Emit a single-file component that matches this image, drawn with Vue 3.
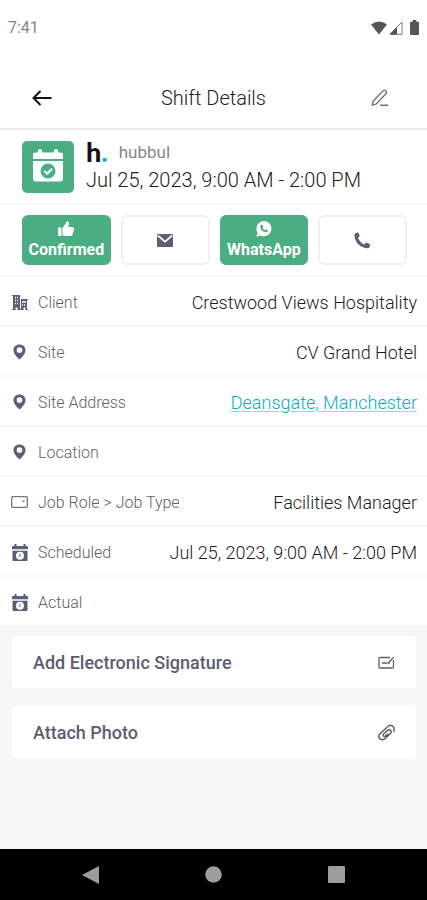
<script setup>
const actions = [
  { icon: 'thumb', label: 'Confirmed', text: true },
  { icon: 'mail', label: 'Email', text: false },
  { icon: 'whatsapp', label: 'WhatsApp', text: true },
  { icon: 'phone', label: 'Call', text: false }
]
const rows = [
  { icon: 'building', label: 'Client', value: 'Crestwood Views Hospitality' },
  { icon: 'pin', label: 'Site', value: 'CV Grand Hotel' },
  { icon: 'pin', label: 'Site Address', value: 'Deansgate, Manchester', link: true },
  { icon: 'pin', label: 'Location', value: '' },
  { icon: 'role', label: 'Job Role > Job Type', value: 'Facilities Manager' },
  { icon: 'calendar', label: 'Scheduled', value: 'Jul 25, 2023, 9:00 AM - 2:00 PM' },
  { icon: 'calendar', label: 'Actual', value: '' }
]
</script>

<template>
  <div class="screen">
    <div class="status">
      <span>7:41</span>
      <div class="status-icons">
        <svg width="16" height="14" viewBox="0 0 16 14"><path d="M0 3.6Q8-2.6 16 3.6L8 13.5Z" fill="#555" /></svg>
        <svg width="14" height="14" viewBox="0 0 14 14"><path d="M1 13.3 13 1V13.3Z" fill="#fff" stroke="#777" stroke-width="1" /><path d="M.5 13.5 8 6V13.5Z" fill="#555" /></svg>
        <svg class="battery" width="9" height="15" viewBox="0 0 9 15"><path d="M2.7 0h3.6v1.7H8q1 0 1 1V14q0 1-1 1H1q-1 0-1-1V2.700q0-1 1-1h1.700z" fill="#555" /></svg>
      </div>
    </div>

    <header class="header">
      <button class="icon-button" aria-label="Back">
        <svg width="20" height="16" viewBox="0 0 20 16" fill="none" stroke="#111" stroke-width="2"><path d="M19.500 8H1.700M8.500 1 1.500 8l7 7" /></svg>
      </button>
      <h1>Shift Details</h1>
      <button class="icon-button" aria-label="Edit">
        <svg width="18" height="18" viewBox="0 0 18 18" fill="none" stroke="#74757f" stroke-width="1.400" stroke-linejoin="round"><path d="M1.200 16.300 2 12.500 11.800 2q1.600-1.500 3-.3 1.400 1.300.1 3L5 15.200Z" /><path d="M9 16.300h8" stroke-width="1.600" /></svg>
      </button>
    </header>

    <section class="summary">
      <div class="badge">
        <svg width="30" height="33" viewBox="0 0 30 33">
          <path d="M0 10V6q0-2.500 2.500-2.500H5V1.800q0-1.800 2-1.800t2 1.800v1.700h12V1.800Q21 0 23 0t2 1.800v1.700h2.500Q30 3.500 30 6v4Z" fill="#fff" />
          <path d="M0 12h30v17.500q0 3-3 3H3q-3 0-3-3Z" fill="#fff" />
          <circle cx="15" cy="22" r="7.500" fill="#4bae83" />
          <path d="m11.400 22 2.700 2.700 5-5" fill="none" stroke="#fff" stroke-width="2.200" />
        </svg>
      </div>
      <div class="summary-text">
        <div class="brand"><span class="logo">h<i>.</i></span><span class="company">hubbul</span></div>
        <p>Jul 25, 2023, 9:00 AM - 2:00 PM</p>
      </div>
    </section>

    <section class="actions">
      <button v-for="a in actions" :key="a.icon" class="action" :class="{ filled: a.text }" :aria-label="a.label">
        <svg v-if="a.icon === 'thumb'" width="16" height="16" viewBox="0 0 16 16" fill="#fff"><path d="M0 6.500h3.500V15H0zM4.500 7.200 8.600 1q.4-1 1.400-.6 1.400.6 1 2.300L10.400 6H14q2.400.2 1.900 2.500L14.800 13q-.6 2-2.600 2H7q-1.500 0-2.500-1z" /></svg>
        <svg v-else-if="a.icon === 'mail'" width="16" height="13" viewBox="0 0 16 13"><rect width="16" height="13" rx="1" fill="#5c5e78" /><path d="m.8 1.500 7.200 6.200 7.200-6.200" fill="none" stroke="#fff" stroke-width="1.700" /></svg>
        <svg v-else-if="a.icon === 'whatsapp'" width="16" height="16" viewBox="0 0 17 17"><path d="M8.700 0a8.100 8.100 0 1 1-3.900 15.400L.4 16.700l1.300-4.200A8.200 8.200 0 0 1 8.700 0Z" fill="#fff" /><path d="M5.500 4.300q1.200-.8 1.800.6l.5 1.300-.8 1.200q.9 1.700 2.500 2.400l1.100-1 1.800.9q.7.500-.1 1.500-1.500 1.500-4.200 0-3-1.800-3.500-4.400-.2-1.600.9-2.500Z" fill="#4bae83" /></svg>
        <svg v-else width="17" height="17" viewBox="0 0 17 17"><path d="M1 1.500 3.500.4q.7-.2 1 .5l1.100 2.700q.2.600-.3 1L4 5.700q1.400 4.200 6.200 6.800l1.300-1.500q.4-.5 1-.2l3.100 1.300q.7.300.5 1l-.8 2.400q-.3.700-1 .7Q7.800 16 3.500 11.400.4 7.800.5 2.500q0-.7.5-1Z" fill="#5c5e78" /></svg>
        <span v-if="a.text">{{ a.label }}</span>
      </button>
    </section>

    <dl class="details">
      <div v-for="r in rows" :key="r.label" class="row">
        <dt>
          <span class="row-icon">
            <svg v-if="r.icon === 'building'" width="16" height="15" viewBox="0 0 16 15"><path d="M1 0h7v15H5.500v-2.500h-2V15H1zM9 4h6v11h-1.500v-2.500h-2V15H9z" fill="#5c5e78" /><path d="M3 2.500h1m1 0h1M3 5.500h1m1 0h1m-3 3h1m1 0h1m4-1.500h4m-4 3h1m1 0h1" stroke="#fff" stroke-width="1.300" /><path d="M0 14.500h3.500M5.500 14.500h6M13.500 14.500H16M0 .5h1M15 4.500h1" stroke="#5c5e78" /></svg>
            <svg v-else-if="r.icon === 'pin'" width="13" height="16" viewBox="0 0 14 16"><path d="M7 0c3.800 0 6.500 2.600 6.500 6 0 3.200-2.200 6-6.500 10C2.700 12 .5 9.200.5 6 .5 2.600 3.200 0 7 0Zm0 3a3 3 0 1 0 0 6 3 3 0 0 0 0-6Z" fill="#5c5e78" /></svg>
            <svg v-else-if="r.icon === 'role'" width="17" height="12" viewBox="0 0 17 12"><rect x=".7" y=".7" width="15.600" height="10.600" rx="1" fill="none" stroke="#74758a" stroke-width="1.300" /><path d="M11 4.500h3l-1.500 2Z" fill="#74758a" /></svg>
            <svg v-else width="16" height="17" viewBox="0 0 16 17"><path d="M0 5.300V3q0-1 1-1h1.500V0h2v2h7V0h2v2H15q1 0 1 1v2.300Z" fill="#5c5e78" /><path d="M.5 6.700h15V16q0 1-1 1h-13q-1 0-1-1Z" fill="#5c5e78" /><circle cx="8" cy="11.700" r="4" fill="#fff" /><path d="M8 9.500v2.300l-1.500 1" fill="none" stroke="#8c8d9c" stroke-width="1.200" /></svg>
          </span>
          {{ r.label }}
        </dt>
        <dd><a v-if="r.link" href="#">{{ r.value }}</a><template v-else>{{ r.value }}</template></dd>
      </div>
    </dl>

    <section class="extras">
      <button class="card">
        Add Electronic Signature
        <svg width="17" height="13" viewBox="0 0 17 13" fill="none" stroke="#5f606b" stroke-width="1.300"><path d="M12 1.500H2q-1 0-1 1V11q0 1 1 1h12.500q1 0 1-1V4M4 7h5M10 7.200l5.700-6M9.500 7.500l2-.2" /></svg>
      </button>
      <button class="card">
        Attach Photo
        <svg width="17" height="17" viewBox="0 0 17 17" fill="none" stroke="#5f606b" stroke-width="1.500" stroke-linecap="round"><path d="M15.700 7.200q1-2.400-.5-4.500-2.300-2.600-5.100-.4L2 9.700Q-.2 12 1.600 14.500q2.200 2.300 5 .4l5.700-5.200q1.500-1.700.4-3.200-1.500-1.400-3.200-.1L5.600 9.900q-1 1.300 0 2.200 1 .7 2-.2L9.800 10" /></svg>
      </button>
    </section>

    <nav class="system-nav">
      <button aria-label="System back"><svg width="17" height="18" viewBox="0 0 17 18"><path d="M17 0v18L0 9Z" fill="#9d9d9d" /></svg></button>
      <button aria-label="Home"><svg width="17" height="17" viewBox="0 0 17 17"><circle cx="8.500" cy="8.500" r="8.300" fill="#9d9d9d" /></svg></button>
      <button aria-label="Recent apps"><svg width="17" height="17" viewBox="0 0 17 17"><rect width="17" height="17" rx="1" fill="#9d9d9d" /></svg></button>
    </nav>
  </div>
</template>

<style>
body { margin: 0; background: #f7f7f7; }
</style>

<style scoped>
* { box-sizing: border-box; }
.screen {
  min-height: 100vh;
  display: flex;
  flex-direction: column;
  background: #f7f7f7;
  font-family: Roboto, "Liberation Sans", sans-serif;
  color: #1c1c1c;
}
button {
  font: inherit;
  color: inherit;
  border: 0;
  padding: 0;
  background: none;
  display: flex;
  align-items: center;
  justify-content: center;
}
svg { display: block; flex: none; }
h1, p, dl, dd { margin: 0; }
.status {
  display: flex;
  justify-content: space-between;
  align-items: center;
  height: 55px;
  padding: 0 8px;
  background: #fff;
  font-size: 16px;
  color: #858585;
}
.status-icons { display: flex; align-items: center; gap: 2px; }
.battery { margin-left: 5px; }
.header {
  display: grid;
  grid-template-columns: 1fr auto 1fr;
  align-items: center;
  height: 75px;
  padding: 12px 28px 0;
  background: #fff;
  border-bottom: 2px solid #e8e8e9;
}
.icon-button { width: 28px; height: 28px; }
.icon-button:last-child { justify-self: end; margin-right: 5px; }
h1 { font-size: 20px; line-height: 24px; font-weight: 300; }
.summary {
  display: flex;
  align-items: center;
  gap: 12px;
  height: 75px;
  padding: 0 22px;
  background: #fff;
  border-bottom: 2px solid #f5f5f6;
}
.badge {
  display: flex;
  align-items: center;
  justify-content: center;
  width: 52px;
  height: 52px;
  padding-bottom: 2px;
  border-radius: 5px;
  background: #4bae83;
}
.summary-text { padding-bottom: 1px; }
.brand { display: flex; align-items: center; gap: 11px; height: 28px; }
.logo { font: 900 27px/28px Lato, sans-serif; color: #111; }
.logo i { font-style: normal; color: #19b5cb; }
.company { font-size: 17px; color: #85868c; }
.summary p { font-size: 20px; line-height: 28px; font-weight: 300; }
.actions {
  display: grid;
  grid-template-columns: repeat(4, 1fr);
  gap: 10px;
  padding: 10px 20px 10px 22px;
  background: #fff;
  border-bottom: 2px solid #f5f5f6;
}
.action {
  flex-direction: column;
  gap: 3px;
  height: 50px;
  border: 2px solid #f0f0f1;
  border-radius: 6px;
}
.action.filled {
  border-color: #4bae83;
  background: #4bae83;
  color: #fff;
  font-size: 16px;
  line-height: 20px;
  font-weight: 700;
}
.details { background: #fff; }
.row {
  display: flex;
  justify-content: space-between;
  align-items: center;
  min-height: 50px;
  padding: 2px 10px 0 11px;
  border-bottom: 2px solid #f5f5f6;
}
dt { display: flex; align-items: center; gap: 10px; font-size: 16px; font-weight: 300; color: #5e5f67; }
.row-icon { display: flex; justify-content: center; width: 17px; }
dd { font-size: 18px; font-weight: 300; }
dd a { color: #08abc6; text-decoration-color: #8fd8e4; text-decoration-thickness: 1px; text-underline-offset: 2px; }
.extras {
  flex: 1;
  display: flex;
  flex-direction: column;
  gap: 18px;
  padding: 9px 11px 18px 12px;
}
.card {
  justify-content: space-between;
  height: 52px;
  padding: 0 21px;
  border-radius: 4px;
  background: #fff;
  font-size: 18px;
  font-weight: 500;
  color: #5c5d70;
}
.system-nav {
  display: grid;
  grid-template-columns: repeat(3, 123px);
  justify-content: center;
  height: 51px;
  background: #000;
}
</style>
